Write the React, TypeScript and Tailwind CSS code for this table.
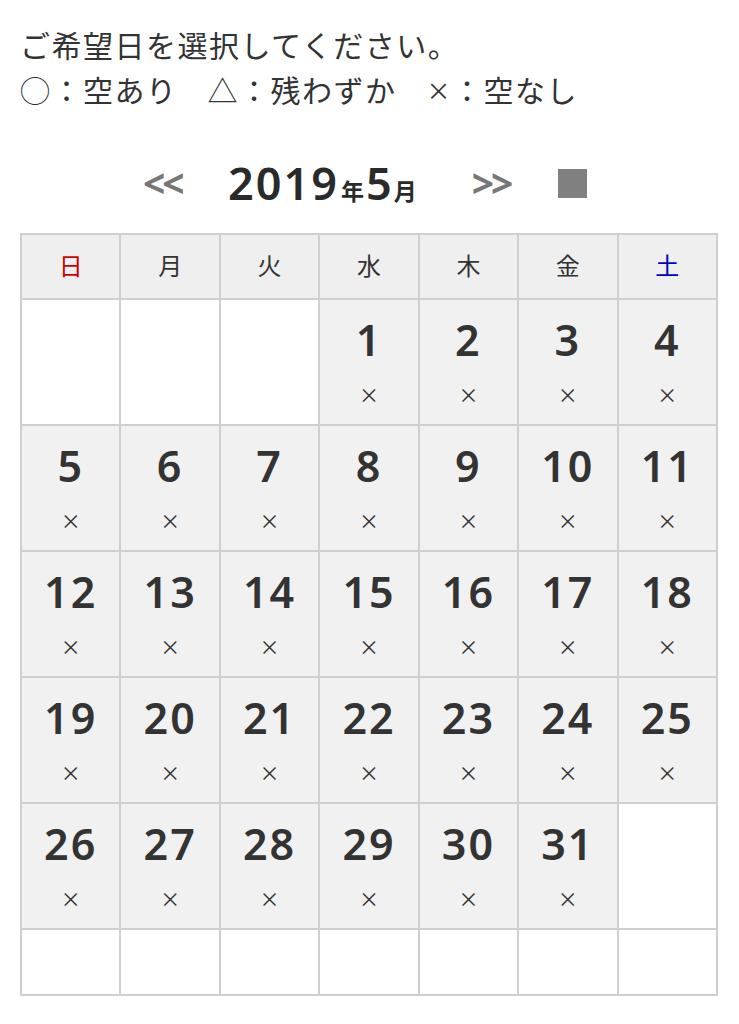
import React from "react";

const days = ["日", "月", "火", "水", "木", "金", "土"];

export default function App() {
  const cells: (number | null)[] = [];
  for (let i = 0; i < 3; i++) cells.push(null);
  for (let d = 1; d <= 31; d++) cells.push(d);
  while (cells.length < 35) cells.push(null);
  const rows: (number | null)[][] = [];
  for (let r = 0; r < 5; r++) rows.push(cells.slice(r * 7, r * 7 + 7));

  const num = { fontFamily: '"Noto Sans", "Liberation Sans", sans-serif' };

  return (
    <div
      className="bg-white min-h-[1024px] w-[739px] text-[#222]"
      style={{ fontFamily: '"Noto Sans CJK JP", "Liberation Sans", sans-serif' }}
    >
      <div className="pl-[20px] pt-[22px] text-[30px] leading-[45px] tracking-[1.5px] text-[#333]">
        <div>ご希望日を選択してください。</div>
        <div className="flex items-center">
          <span>◯：空あり</span>
          <span className="ml-[30px]">△：残わずか</span>
          <span className="ml-[30px] flex items-center">
            <span className="text-[24px]">×</span>
            <span>：空なし</span>
          </span>
        </div>
      </div>

      <div className="flex items-center h-[66px] mt-[38px] pl-[143px]">
        <span className="text-[#777] text-[39px] font-bold tracking-[-3px] w-[44px]" style={num}>
          &lt;&lt;
        </span>
        <span className="ml-[41px] flex items-baseline font-semibold text-[#2a2a2a]">
          <span className="text-[45px] tracking-[2px]" style={num}>2019</span>
          <span className="text-[23px] mx-[2px]">年</span>
          <span className="text-[45px]" style={num}>5</span>
          <span className="text-[23px] ml-[2px]">月</span>
        </span>
        <span className="ml-[55px] text-[#777] text-[39px] font-bold tracking-[-3px] w-[44px]" style={num}>
          &gt;&gt;
        </span>
        <span className="ml-[42px] w-[29px] h-[29px] bg-[#808080]" />
      </div>

      <table className="ml-[20px] mt-[17px] w-[698px] border-collapse table-fixed">
        <thead>
          <tr className="h-[65px] bg-[#efefef]">
            {days.map((d, i) => (
              <th
                key={d}
                className={`border-2 border-[#cfcfcf] font-normal text-[24px] pb-[3px] ${
                  i === 0 ? "text-[#cc0000]" : i === 6 ? "text-[#0000cc]" : "text-[#333]"
                }`}
              >
                {d}
              </th>
            ))}
          </tr>
        </thead>
        <tbody>
          {rows.map((row, ri) => (
            <tr key={ri} className="h-[126px]">
              {row.map((c, ci) => (
                <td
                  key={ci}
                  className={`border-2 border-[#cfcfcf] align-top text-center ${
                    c ? "bg-[#f1f1f1]" : "bg-white"
                  }`}
                >
                  {c && (
                    <div className="flex flex-col items-center pt-[14px]">
                      <span
                        className="text-[43px] leading-[52px] font-semibold tracking-[2px] text-[#333]"
                        style={num}
                      >
                        {c}
                      </span>
                      <span className="text-[20px] leading-[22px] mt-[18px] text-[#333]">×</span>
                    </div>
                  )}
                </td>
              ))}
            </tr>
          ))}
          <tr className="h-[66px]">
            {days.map((d) => (
              <td key={d} className="border-2 border-[#cfcfcf] bg-white" />
            ))}
          </tr>
        </tbody>
      </table>
    </div>
  );
}
